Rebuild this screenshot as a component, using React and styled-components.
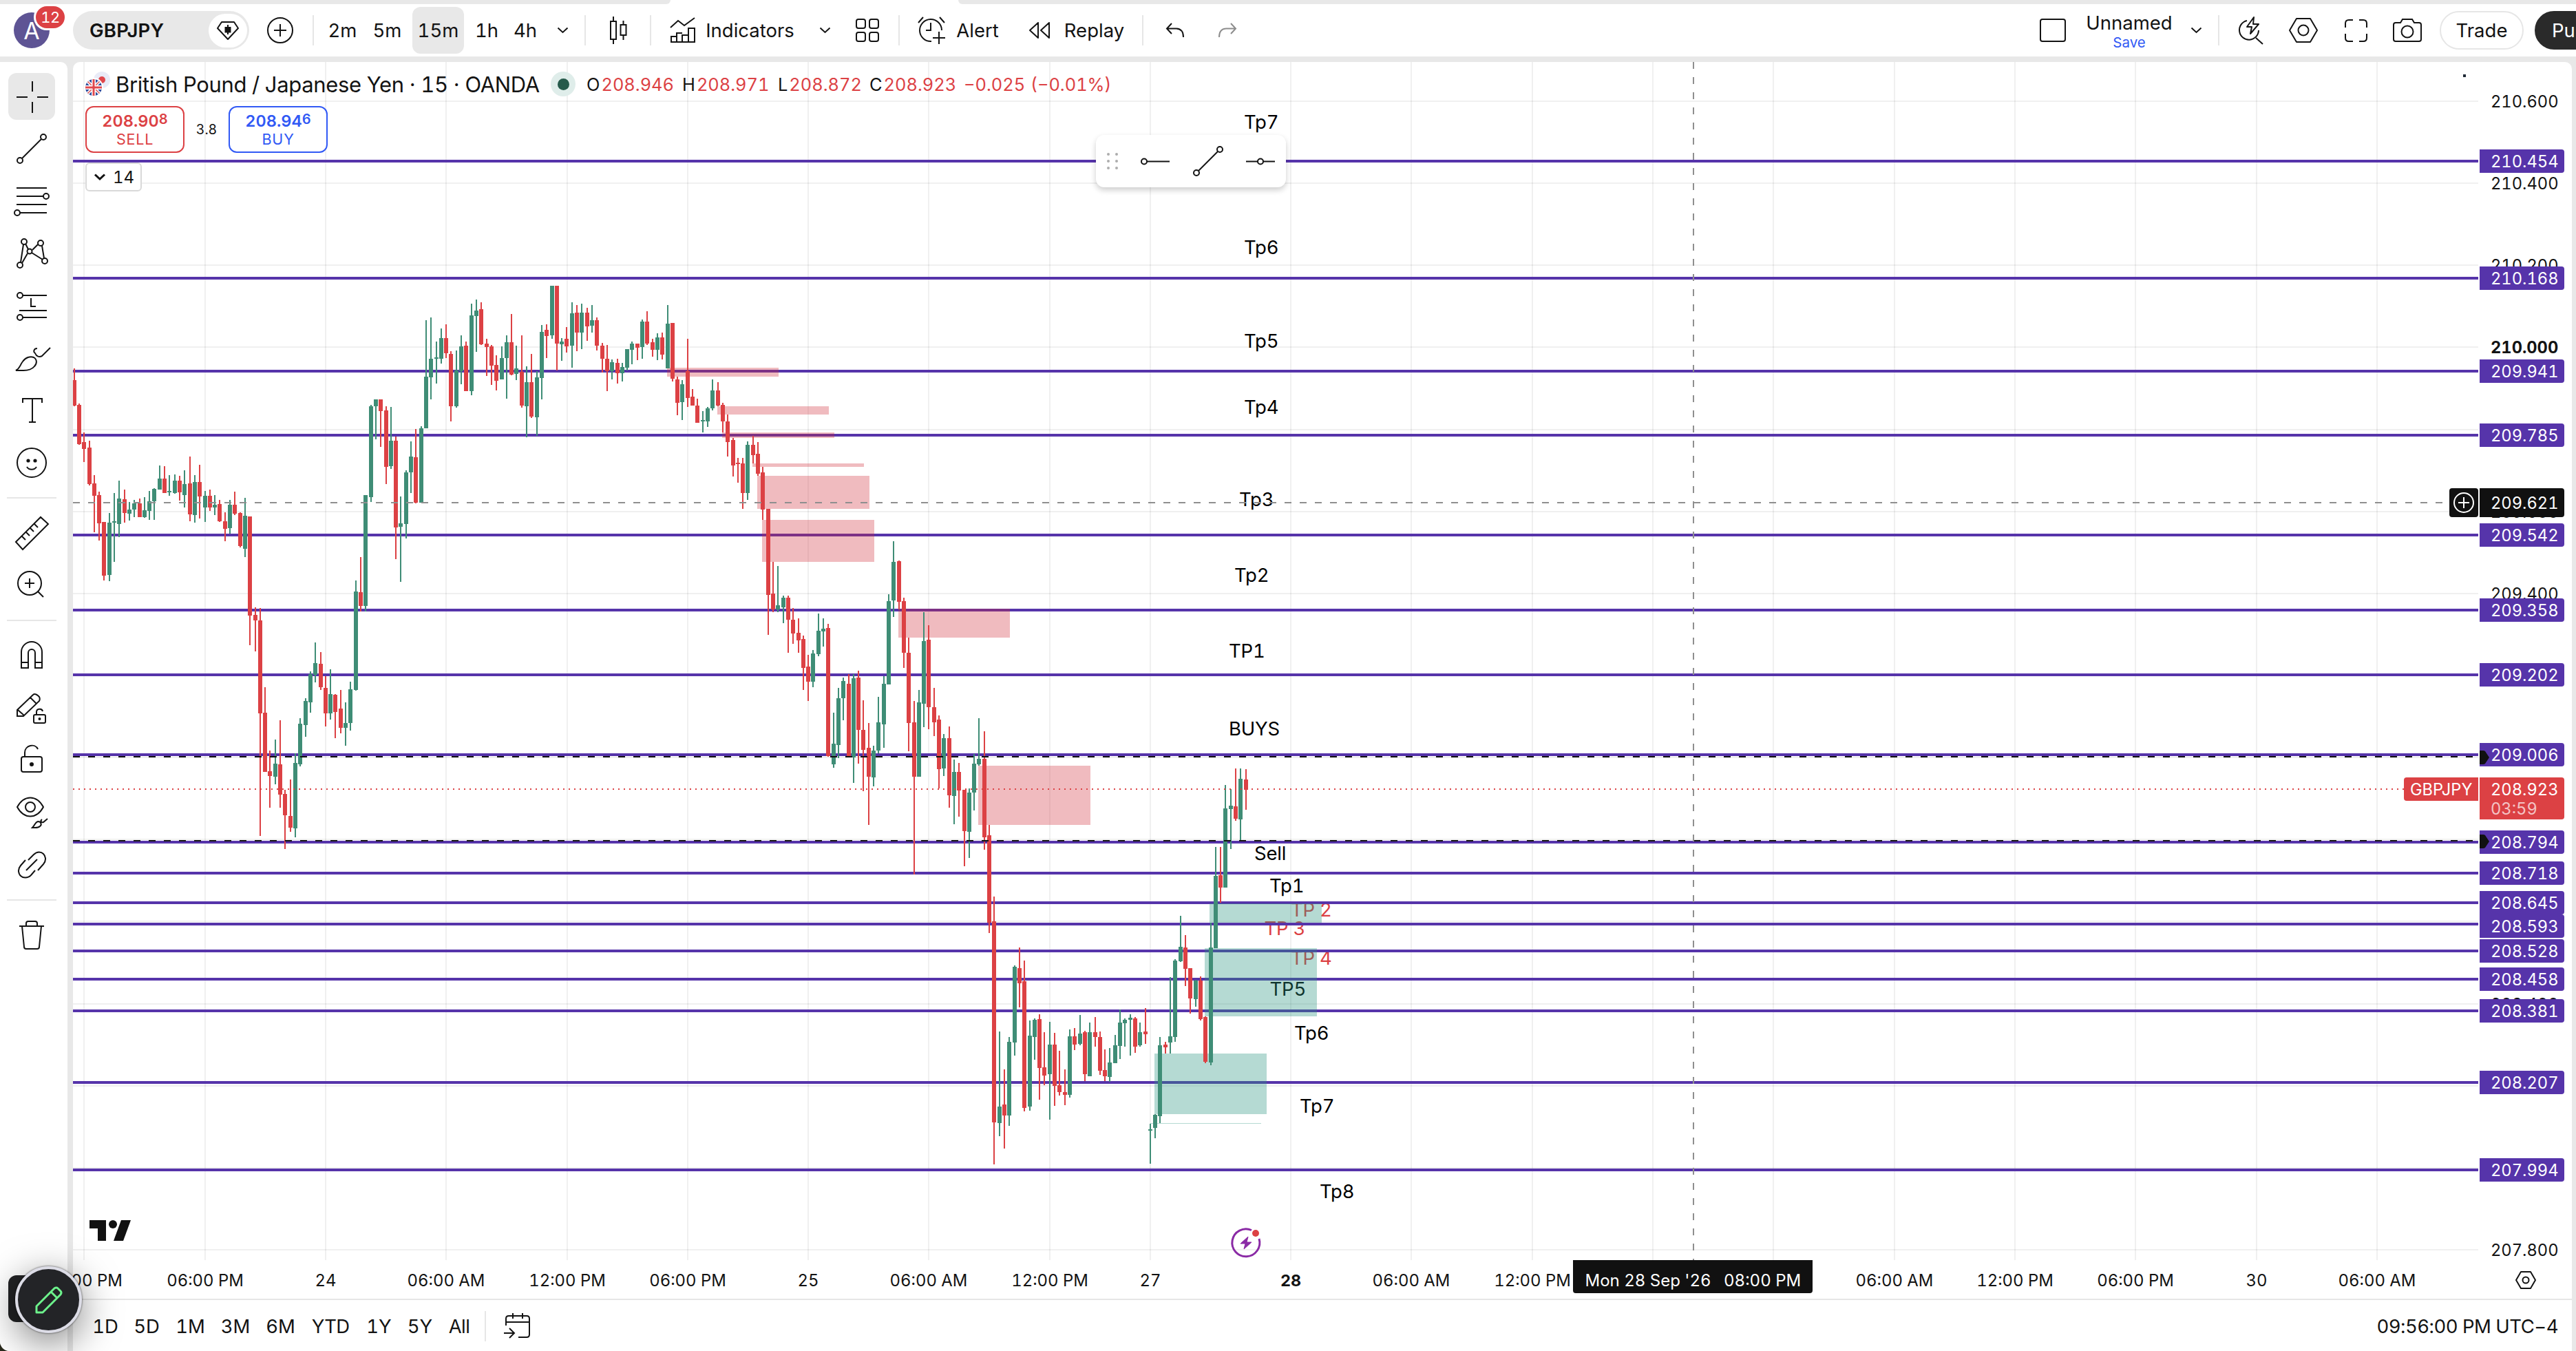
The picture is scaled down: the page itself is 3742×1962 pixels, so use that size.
import React from 'react';
import styled, { createGlobalStyle } from 'styled-components';

const ink = '#131313';
const red = '#dc4144';
const green = '#3f8d76';
const violet = '#5634aa';
const blue = '#3159f5';
const shell = '#e8e8e8';

const Global = createGlobalStyle`
  * { box-sizing: border-box; }
  html { background: #2a2a1c; }
  body {
    margin: 0;
    font-family: Inter, "Liberation Sans", sans-serif;
    font-variant-numeric: tabular-nums;
    color: ${ink};
    overflow: hidden;
  }
`;

/* ---------- frame ---------- */

const Window = styled.div`
  width: 3742px;
  height: 1962px;
  display: flex;
  flex-direction: column;
  background: ${shell};
  border-bottom-left-radius: 14px;
  overflow: hidden;
`;

const TabStrip = styled.div`
  height: 6px;
  display: flex;
  background: #fff;
`;

const StripPart = styled.div`
  width: ${(p) => p.$w}px;
  background: ${shell};
  border-radius: ${(p) => (p.$first ? '0 0 8px 0' : '0 0 0 8px')};
  margin-right: ${(p) => (p.$first ? 418 : 0)}px;
`;

const Header = styled.header`
  height: 76px;
  background: #fff;
  display: flex;
  align-items: center;
  padding-left: 20px;
  overflow: hidden;
`;

const Body = styled.div`
  flex: 1;
  margin-top: 8px;
  display: flex;
  gap: 8px;
  min-height: 0;
`;

const Tools = styled.nav`
  width: 98px;
  background: #fff;
  border-top-right-radius: 10px;
  padding-top: 12px;
  display: flex;
  flex-direction: column;
  align-items: flex-start;
`;

const Main = styled.main`
  width: 3630px;
  background: #fff;
  border-radius: 10px 10px 0 0;
  display: flex;
  flex-direction: column;
  position: relative;
`;

/* ---------- header parts ---------- */

const Slot = styled.div`
  flex: none;
  width: ${(p) => p.$w}px;
  height: 68px;
  margin-left: ${(p) => p.$ml || 0}px;
  display: flex;
  align-items: center;
  justify-content: center;
  border-radius: 12px;
  white-space: nowrap;
  font-size: 27.5px;
  line-height: 34px;
  background: ${(p) => (p.$active ? shell : 'transparent')};
`;

const Divider = styled.div`
  flex: none;
  width: 2px;
  height: 44px;
  margin-left: ${(p) => p.$ml || 0}px;
  background: #e6e6e6;
`;

const Avatar = styled.div`
  flex: none;
  position: relative;
  width: 52px;
  height: 52px;
  border-radius: 50%;
  background: #5e5494;
  color: #fff;
  font-size: 34px;
  display: flex;
  align-items: center;
  justify-content: center;
`;

const Badge = styled.span`
  position: absolute;
  left: 29px;
  top: -12px;
  width: 48px;
  height: 38px;
  border: 3px solid #fff;
  border-radius: 19px;
  background: ${red};
  font-size: 22px;
  letter-spacing: -0.5px;
  display: flex;
  align-items: center;
  justify-content: center;
`;

const SymbolPill = styled.div`
  flex: none;
  width: 256px;
  height: 56px;
  margin-left: 34px;
  padding: 0 3px 0 24px;
  border-radius: 28px;
  background: ${shell};
  display: flex;
  align-items: center;
  justify-content: space-between;
  font-size: 27.5px;
  font-weight: 600;
  letter-spacing: 0.2px;
`;

const PillKnob = styled.span`
  width: 56px;
  height: 49px;
  border-radius: 25px;
  background: #fff;
  display: flex;
  align-items: center;
  justify-content: center;
`;

const Spacer = styled.div`
  flex: none;
  width: ${(p) => p.$w}px;
`;

const LayoutName = styled.div`
  flex: none;
  width: 124px;
  margin-left: 29px;
  display: flex;
  flex-direction: column;
  align-items: center;
  font-size: 27.5px;
  line-height: 33px;
  padding-top: 2px;
`;

const SaveLink = styled.span`
  font-size: 20.5px;
  line-height: 24px;
  color: ${blue};
`;

const TradeButton = styled.button`
  flex: none;
  width: 122px;
  height: 56px;
  margin-left: 23px;
  padding: 0;
  border: 2px solid #e6e6e6;
  border-radius: 28px;
  background: #fff;
  font: inherit;
  font-size: 27.5px;
  color: ${ink};
`;

const PublishButton = styled(TradeButton)`
  width: 160px;
  margin-left: 16px;
  padding-left: 23px;
  border-color: #2a2a2a;
  background: #2a2a2a;
  color: #fff;
  text-align: left;
`;

/* ---------- tool column parts ---------- */

const ToolSlot = styled.div`
  width: 92px;
  height: 76px;
  display: flex;
  align-items: center;
  justify-content: center;
`;

const ToolFace = styled.div`
  width: 68px;
  height: 68px;
  border-radius: 12px;
  display: flex;
  align-items: center;
  justify-content: center;
  background: ${(p) => (p.$active ? shell : 'transparent')};
`;

const ToolRule = styled.div`
  width: 72px;
  height: 2px;
  margin: 12px 0 12px 10px;
  background: #e6e6e6;
`;

const Glyph = styled.svg`
  display: block;
  flex: none;
  overflow: visible;
  fill: none;
  stroke: ${(p) => (p.$filled ? 'none' : 'currentColor')};
  stroke-width: ${(p) => p.$sw || 2};
`;

/* ---------- chart parts ---------- */

const Plot = styled.svg`
  display: block;
  width: 3630px;
  height: 1796px;
  flex: none;
  border-radius: 10px 10px 0 0;
  font-family: Inter, "Liberation Sans", sans-serif;
  font-variant-numeric: tabular-nums;
`;

const AxisText = styled.text`
  font-size: ${(p) => p.$size || 24}px;
  fill: ${(p) => p.$c || ink};
  font-weight: ${(p) => (p.$bold ? 700 : 400)};
  text-anchor: ${(p) => p.$anchor || 'start'};
`;

const NoteText = styled.text`
  font-size: 27.5px;
  letter-spacing: -0.2px;
  fill: ${(p) => p.$c || '#000'};
`;

const Legend = styled.div`
  position: absolute;
  left: 18px;
  top: 10px;
  display: flex;
  flex-direction: column;
  align-items: flex-start;
`;

const LegendRow = styled.div`
  height: 44px;
  display: flex;
  align-items: center;
  white-space: nowrap;
`;

const Title = styled.span`
  width: 624px;
  margin-left: 6px;
  font-size: 31px;
  letter-spacing: -0.34px;
`;

const StatusDot = styled.span`
  width: 36px;
  height: 36px;
  margin-left: 8px;
  margin-right: 16px;
  border-radius: 50%;
  background: #dfedea;
  display: flex;
  align-items: center;
  justify-content: center;
  &::after {
    content: '';
    width: 17px;
    height: 17px;
    border-radius: 50%;
    background: #265a4b;
  }
`;

const Quote = styled.span`
  width: ${(p) => p.$w}px;
  font-size: 25.4px;
  color: ${red};
  b { font-weight: 400; color: ${ink}; margin-right: 2px; }
`;

const DealRow = styled.div`
  margin-top: 10px;
  display: flex;
  align-items: center;
`;

const DealButton = styled.div`
  width: 144px;
  height: 68px;
  border: 2px solid ${(p) => p.$c};
  border-radius: 12px;
  background: #fff;
  color: ${(p) => p.$c};
  display: flex;
  flex-direction: column;
  align-items: center;
  justify-content: center;
  gap: 1px;
`;

const DealPrice = styled.span`
  font-size: 23.5px;
  font-weight: 600;
  line-height: 27px;
  sup { font-size: 20px; line-height: 0; vertical-align: 4px; }
`;

const DealSide = styled.span`
  font-size: 21.5px;
  line-height: 25px;
  letter-spacing: 0.8px;
`;

const Spread = styled.span`
  width: 64px;
  text-align: center;
  font-size: 19.5px;
`;

const Collapse = styled.div`
  margin-top: 14px;
  width: 82px;
  height: 42px;
  border: 2px solid #d9d9d9;
  border-radius: 6px;
  background: #fff;
  display: flex;
  align-items: center;
  padding-left: 11px;
  gap: 11px;
  font-size: 24px;
  position: relative;
`;

const DrawBar = styled.div`
  position: absolute;
  left: 1486px;
  top: 106px;
  width: 276px;
  height: 76px;
  border-radius: 12px;
  background: #fff;
  box-shadow: 0 4px 8px rgba(0, 0, 0, 0.2);
  display: flex;
  align-items: center;
  padding: 0 16px;
  justify-content: space-between;
`;

const FootBar = styled.footer`
  flex: none;
  height: 76px;
  padding-top: 2px;
  border-top: 2px solid #e6e6e6;
  display: flex;
  align-items: center;
  font-size: 27.5px;
`;

const Range = styled.span`
  flex: none;
  width: ${(p) => p.$w}px;
  text-align: center;
  white-space: nowrap;
  letter-spacing: ${(p) => p.$ls || 0}px;
`;

const Clock = styled.span`
  margin-left: auto;
  margin-right: 20px;
  white-space: nowrap;
  letter-spacing: -0.5px;
`;

const PenStub = styled.div`
  position: absolute;
  left: 12px;
  top: 1852px;
  width: 60px;
  height: 68px;
  border-radius: 12px;
  background: #222325;
`;

const PenBubble = styled.div`
  position: absolute;
  left: 22px;
  top: 1839px;
  width: 97px;
  height: 97px;
  border-radius: 50%;
  border: 4px solid #dcdce6;
  background: #232427;
  color: #6df28c;
  box-shadow: 0 0 2px 1px rgba(0, 0, 0, 0.35), 0 14px 56px rgba(0, 0, 0, 0.5);
  display: flex;
  align-items: center;
  justify-content: center;
`;

/* ---------- data ---------- */

const levels = [
  [234, '210.454'], [404, '210.168'], [539, '209.941'], [632, '209.785'], [777, '209.542'], [886, '209.358'],
  [980, '209.202'], [1096, '209.006'], [1223, '208.794'], [1268, '208.718'], [1311, '208.645'],
  [1342, '208.593', 1345], [1381, '208.528'], [1422, '208.458'], [1468, '208.381'], [1572, '208.207'], [1699, '207.994'],
];

const notes = [
  [1807, 187, 'Tp7'], [1807, 368.5, 'Tp6'], [1807, 505, 'Tp5'], [1807, 600.5, 'Tp4'], [1800, 735, 'Tp3'],
  [1793, 844.5, 'Tp2'], [1785, 954.5, 'TP1'], [1785, 1067.5, 'BUYS'], [1822, 1249, 'Sell'], [1844, 1296, 'Tp1'],
  [1875, 1330.5, 'TP 2', red], [1836.5, 1358, 'TP 3', red], [1875, 1401, 'TP 4', red], [1844.5, 1446, 'TP5'],
  [1880, 1510, 'Tp6'], [1888, 1616, 'Tp7'], [1917, 1739.5, 'Tp8'],
];

const zones = [
  [969, 534, 162, 13], [1042, 590, 162, 12], [1049, 628, 163, 8], [1093, 673, 162, 5], [1100, 691, 163, 48],
  [1107, 755, 163, 61], [1305, 884, 162, 42], [1421, 1112, 163, 86],
  [1757, 1312, 163, 28, 1], [1750, 1377, 163, 99, 1], [1677, 1530, 163, 88, 1], [1671, 1631, 161, 1, 1],
];

const timeline = [
  [122, '12:00 PM'], [298, '06:00 PM'], [473, '24'], [648, '06:00 AM'], [824, '12:00 PM'], [999, '06:00 PM'],
  [1174, '25'], [1349, '06:00 AM'], [1525, '12:00 PM'], [1671, '27'], [1875, '28'], [2050, '06:00 AM'],
  [2226, '12:00 PM'], [2401, ''], [2576, ''], [2752, '06:00 AM'], [2927, '12:00 PM'], [3102, '06:00 PM'],
  [3278, '30'], [3453, '06:00 AM'],
];

/* Candle blocks: direction, then high, body top, body bottom and low in the block's own units. */
const blocks = [
  { first: -2, top: 380, unit: 1.742, bars: `R270 300 364 366,R359 362 462 463,R432 456 474 507,R453 470 563 566,R540 561 592 685,R582 591 662 706,R659 659 794 807,G636 660 793 808,G585 657 660 760,G554 599 664 697,R577 601 636 660,G608 627 638 655,G603 612 627 646,R599 612 646 646,G596 629 646 648,G580 606 631 653,G573 575 606 653,G516 549 577 577,R517 549 585 585,G540 580 584 592,G538 554 585 587,R542 554 584 605,G528 563 591 622,R493 561 639 657,G540 558 641 660,R514 558 594 650,G580 592 622 659,R577 592 622 631,G591 615 622 641,R603 613 657 659,R634 657 676 707,G603 615 674 688,R582 615 638 641,R634 636 720 723,G598 643 727 747,R645 645 896 970,R875 894 908 986,R876 908 1143 1453,R1077 1141 1291 1291,R1237 1289 1301 1382,G1209 1270 1303 1322,R1160 1272 1348 1382,R1336 1347 1401 1486,R1310 1402 1432 1443,G1244 1268 1434 1456,G1155 1169 1272 1277,G1105 1112 1173 1202,G1037 1043 1115 1141,G963 1016 1045 1064,R988 1017 1077 1084,R1048 1078 1143 1176,G1031 1094 1143 1159,R1094 1096 1139 1206,R1084 1131 1179 1193,G1115 1167 1179 1225,G1063 1082 1167 1186,G807 835 1084 1085,R747 836 871 885,G591 591 871 885,G362 366 596 608,G348 348 366 449,R348 348 378 469,R366 376 519 563,G368 453 517 524,R443 453 672 753,G594 662 671 810,G528 533 664 700,G455 493 533 585,R423 495 610 612,G416 422 610 610,G148 291 422 422,G141 246 293 348,G202 242 246 308,G169 193 246 258,R159 193 232 244,R226 233 366 404,G225 276 366 369,G186 214 277 310,R202 213 328 328,G106 136 328 338,G96 124 138 228,R103 120 209 211,R195 207 216 289,R211 214 263 312,R237 261 301 326,G214 244 298 298,G186 204 244 347,R132 204 286 287,G213 270 284 300,R186 279 364 369,G265 305 366 444,R233 305 392 395,G277 293 394 441,G160 178 294 348,R159 172 188 244,G61 61 186 195,R61 61 207 275,G193 202 209 251,R166 195 214 230,G103 131 213 268,R110 129 179 226,G106 129 179 221,R117 129 164 200,G110 148 162 179,R141 148 213 225,R206 213 246 280,R211 246 277 328,G247 254 277 298,R246 256 282 308,G256 267 282 303,G221 221 268 275,G202 207 223 260,R207 207 218 249,G146 152 216 246,R125 152 207 211,R195 204 223 240,G181 192 223 249,R179 192 235 247,G110 157 270 270,R155 155 296 303,R291 298 357 389,G300 310 355 401,R195 277 345 368,R322 341 364 364,R347 364 408 408,G378 401 404 432,G368 371 404 418,G298 326 371 376,R305 326 364 366,R357 362 404 432,R387 404 456 493,R446 451 516 544,R497 509 512 559,R497 510 585 625,G455 463 585 603,R441 463 490 510,R456 486 537 542,R519 533 627 653,R625 625 843 944,R760 840 880 887,G770 869 880 887,G845 850 875 915,R845 850 906 990,R876 906 941 967,R902 939 958 990,R946 955 1028 1084,R995 1024 1063 1112,G983 991 1063 1077,G890 934 993 998,G902 929 936 974,R916 927 1250 1253,G1141 1220 1272 1281,G1078 1105 1223 1256,G1052 1061 1105 1160,R1044 1068 1251 1251,G1044 1054 1254 1319,R1035 1052 1185 1270,R1110 1185 1235 1340,R1167 1230 1303 1425,G1225 1237 1305 1328,G1101 1166 1237 1244,G1048 1068 1171 1230,G841 859 1070 1070,G707 760 857 899,R756 758 861 880,R850 859 990 1028,R951 990 1167 1239,R1112 1166 1303 1551,G1084 1115 1303 1303,G887 960 1119 1178,R920 956 1127 1183,R1078 1127 1166 1200,R1148 1159 1284 1333,G1195 1206 1282 1301,R1176 1206 1350 1382,G1260 1291 1352 1423,R1268 1291 1338 1404,R1336 1336 1441 1530,G1333 1343 1443 1509,G1245 1270 1343 1389,G1155 1258 1272 1275,R1188 1258 1456 1488` },
  { first: 180, top: 1080, unit: 2.24, bars: `R264 298 582 616,R497 578 1232 1369,G936 1180 1234 1277,R1060 1174 1210 1317,G954 970 1210 1243,G721 726 972 1015,R663 730 780 858,R706 773 1185 1196,G900 950 1180 1194,G894 898 954 1028,R880 896 1055 1158,R939 1053 1080 1111,G905 979 1075 1223,R941 979 1113 1178,R999 1111 1133 1145,R1060 1133 1142 1176,G930 952 1142 1151,R925 952 979 997,G883 943 977 981,R934 939 1075 1098,G907 939 1082 1082,R889 939 954 986,R936 954 1064 1077,R995 1062 1082 1098,G990 1037 1084 1100,G948 981 1039 1039,G865 907 983 1026,G894 898 909 986,G880 892 898 1015,R889 894 986 1006,G907 939 981 986,R860 936 945 977,G1236 1254 1259 1366,G1205 1207 1250 1284,G954 981 1212 1234,R970 979 988 1008,G759 952 972 1008,G701 706 954 970,G560 661 708 710,R623 663 732 788,R730 730 829 878,G768 770 831 856,R757 770 896 900,R887 889 1035 1039,G583 663 1037 1046,G336 430 665 665,R336 428 468 518,G134 211 468 468,G148 202 213 343,R81 204 244 251,G81 114 246 318,R83 116 150 215` },
];

const candles = blocks.flatMap((b) =>
  b.bars.split(',').map((bar, i) => {
    const [h, t, d, l] = bar.slice(1).split(' ').map((v) => Math.round(b.top + Number(v) / b.unit));
    return { x: Math.round(122.2 + 7.305 * (b.first + i)), up: bar[0] === 'G', h, t, d: Math.max(d, t + 2), l };
  })
);

const priceTicks = Array.from({ length: 15 }, (_, k) => ({
  y: Math.round(147 + 119.14 * k),
  label: (210.6 - 0.2 * k).toFixed(3),
}));

/* ---------- icons ---------- */

const Ring = ({ x, y, r = 4 }) => <circle cx={x} cy={y} r={r} fill="#fff" />;

const toolIcons = {
  cross: <path d="M6 29H22M36 29H52M29 6V21M29 36V52" />,
  trend: <><path d="M14 42 42 14" /><Ring x={11} y={45} /><Ring x={45} y={11} /></>,
  fib: <><path d="M6 9H50M6 21H45M6 33H50M11 45H50" /><Ring x={49} y={21} /><Ring x={7} y={45} /></>,
  pattern: (
    <>
      <path d="M16 15 12 41M19 14 23 22M14 42 22 28M29 23 37 15M28 27 44 37M43 17 46 35" />
      <Ring x={17} y={11} /><Ring x={11} y={45} /><Ring x={25} y={25} r={3.5} /><Ring x={41} y={13} /><Ring x={47} y={39} />
    </>
  ),
  position: <><path d="M15 13H50M27 17V29H34M10 35H50M15 45H50" /><Ring x={11} y={13} /><Ring x={11} y={45} /></>,
  brush: (
    <>
      <path d="M5 46c6-3 6-8 10-13 4-6 11-8 16-6 5 3 5 9 1 13-4 5-10 6-16 6z" />
      <path d="M36 14c-5 0-6 5-3 7 2 5 6 6 10 4L55 13" />
    </>
  ),
  text: <path d="M15 17V11H43V17M29 11V45M24 45H34" />,
  smile: <><circle cx="28" cy="28" r="21" /><path d="M21 34c3 5 11 5 14 0" /><circle cx="23" cy="25" r="1.6" fill="currentColor" /><circle cx="33" cy="25" r="1.6" fill="currentColor" /></>,
  ruler: <path d="M5 41 41 5 52 15 15 52ZM14 33 19 38M20 27 25 32M26 21 31 26M32 15 37 20" />,
  zoom: <><circle cx="25" cy="25" r="17" /><path d="M18 25H32M25 18V32M37 37 45 45" /></>,
  magnet: <path d="M13 46V23a15 15 0 0 1 30 0V46H33V24a5 5 0 0 0-10 0V46ZM13 38H23M33 38H43" />,
  pencilLock: (
    <>
      <path d="M7 40V31L30 9c3-3 7 1 9 3 1 2 1 4 0 6L16 40ZM26 13 35 22M8 31 17 39" />
      <rect x="31" y="38" width="17" height="12" rx="2" fill="#fff" /><path d="M35 37V34c0-5 8-6 9-1" /><circle cx="39.500" cy="44" r="1" />
    </>
  ),
  lock: <><rect x="13" y="23" width="30" height="22" rx="3" /><path d="M18 22V17c0-11 15-14 19-5" /><circle cx="28" cy="34" r="2" fill="currentColor" /></>,
  eye: (
    <>
      <path d="M7 20C17 2 35 2 45 20 35 38 17 38 7 20Z" /><circle cx="26" cy="20" r="7" />
      <path d="M29 50c4-4 4-8 8-9 5 0 6 5 3 7-3 3-7 2-11 2zM43 38c-3 2-1 5 2 4l6-5" />
    </>
  ),
  link: <path d="M19 21 12 29c-5 6-3 12 0 15s10 4 15-1L33 36M37 36 45 27c5-6 3-12 0-15s-9-4-14 1L23 21M20 36 36 20" />,
  trash: <path d="M10 15H46M20 15V11c0-2 1-3 3-3H33c2 0 3 1 3 3V15M14 15 17 45c0 2 1 3 3 3H36c2 0 3-1 3-3L42 15" />,
};

const Tool = ({ name, active }) => (
  <ToolSlot>
    <ToolFace $active={active}>
      <Glyph width="56" height="56" viewBox="0 0 56 56">{toolIcons[name]}</Glyph>
    </ToolFace>
  </ToolSlot>
);

const Chevron = ({ w = 15, sw = 2 }) => (
  <Glyph width={w} height="8" viewBox="0 0 15 8" $sw={sw}><path d="M0.500 0.500 7.500 7 14.500 0.500" /></Glyph>
);

const Hexagon = () => (
  <Glyph width="42" height="36" viewBox="0 0 42 36">
    <path d="M11 1H31L41 18 31 35H11L1 18Z" strokeLinejoin="round" /><circle cx="21" cy="18" r="7.500" />
  </Glyph>
);

/* ---------- sections ---------- */

function TopBar() {
  return (
    <Header>
      <Avatar>A<Badge>12</Badge></Avatar>
      <SymbolPill>
        GBPJPY
        <PillKnob>
          <Glyph width="32" height="27" viewBox="0 0 32 27">
            <path d="M7 1H25L31 10 16 26 1 10Z" strokeLinejoin="round" /><path d="M16 5V19" /><rect x="12.500" y="9" width="7" height="6.500" fill="currentColor" />
          </Glyph>
        </PillKnob>
      </SymbolPill>
      <Slot $w={38} $ml={26}>
        <Glyph width="38" height="38" viewBox="0 0 38 38"><circle cx="19" cy="19" r="18" /><path d="M10 19H28M19 10V28" /></Glyph>
      </Slot>
      <Divider $ml={28} />
      <Slot $w={65} $ml={9}>2m</Slot>
      <Slot $w={65}>5m</Slot>
      <Slot $w={75} $ml={4} $active>15m</Slot>
      <Slot $w={66}>1h</Slot>
      <Slot $w={46}>4h</Slot>
      <Slot $w={63}><Chevron /></Slot>
      <Divider />
      <Slot $w={93}>
        <Glyph width="27" height="40" viewBox="-1 0 27 40">
          <rect x="2" y="7" width="8" height="26" /><path d="M6 0V7M6 33V40M20.500 6V12M20.500 27V34" /><rect x="16.500" y="12" width="8" height="15" />
        </Glyph>
      </Slot>
      <Divider />
      <Slot $w={40} $ml={26}>
        <Glyph width="36" height="36" viewBox="0 0 36 36">
          <path d="M0 14 11 4 20 11 35 0M1 35V27H9M9 35V22H17M17 35V25H26M26 35V15H35V35H0M9 27V22" />
        </Glyph>
      </Slot>
      <Slot $w={129} $ml={13}>Indicators</Slot>
      <Slot $w={50} $ml={19}><Chevron /></Slot>
      <Slot $w={74}>
        <Glyph width="34" height="34" viewBox="0 0 34 34">
          <rect x="1" y="1" width="13" height="13" rx="3" /><rect x="20" y="1" width="13" height="13" rx="3" />
          <rect x="1" y="20" width="13" height="13" rx="3" /><rect x="20" y="20" width="13" height="13" rx="3" />
        </Glyph>
      </Slot>
      <Divider $ml={8} />
      <Slot $w={40} $ml={26}>
        <Glyph width="40" height="40" viewBox="0 0 40 40">
          <path d="M20 36A16 16 0 1 1 35 20M1 9 8 1M32 1 39 9M19 9V20H12M31 22V40M22 31H40" />
        </Glyph>
      </Slot>
      <Slot $w={64} $ml={15}>Alert</Slot>
      <Slot $w={40} $ml={38}>
        <Glyph width="30" height="26" viewBox="0 0 30 26"><path d="M13 2V24L1 13ZM29 2V24L17 13Z" strokeLinejoin="round" /></Glyph>
      </Slot>
      <Slot $w={89} $ml={15}>Replay</Slot>
      <Divider $ml={25} />
      <Slot $w={40} $ml={26}>
        <Glyph width="26" height="21" viewBox="0 0 26 21"><path d="M8 0 1 7.500 8 15M1 7.500H15Q25 8 25 20" /></Glyph>
      </Slot>
      <Slot $w={40} $ml={36}>
        <Glyph width="26" height="21" viewBox="0 0 26 21" color="#8c8c8c"><path d="M18 0 25 7.500 18 15M25 7.500H11Q1 8 1 20" /></Glyph>
      </Slot>
      <Spacer $w={1159} />
      <Slot $w={40}>
        <Glyph width="38" height="34" viewBox="0 0 38 34"><rect x="1" y="1" width="36" height="32" rx="3" /></Glyph>
      </Slot>
      <LayoutName>Unnamed<SaveLink>Save</SaveLink></LayoutName>
      <Slot $w={40} $ml={15}><Chevron /></Slot>
      <Divider $ml={12} />
      <Slot $w={48} $ml={22}>
        <Glyph width="36" height="40" viewBox="0 0 36 40">
          <path d="M12 6A14 14 0 1 0 29 20M25 31 35 40" /><path d="M22 1 12 15H19L17 25 29 11H21Z" strokeLinejoin="round" />
        </Glyph>
      </Slot>
      <Slot $w={48} $ml={28}><Hexagon /></Slot>
      <Slot $w={48} $ml={28}>
        <Glyph width="33" height="33" viewBox="0 0 33 33"><path d="M1 12V6Q1 1 6 1H12M21 1H27Q32 1 32 6V12M32 21V27Q32 32 27 32H21M12 32H6Q1 32 1 27V21" /></Glyph>
      </Slot>
      <Slot $w={48} $ml={27}>
        <Glyph width="42" height="34" viewBox="0 0 42 34">
          <path d="M1 9Q1 6 4 6H11L14 1H28L31 6H38Q41 6 41 9V30Q41 33 38 33H4Q1 33 1 30Z" /><circle cx="21" cy="19" r="8.500" />
        </Glyph>
      </Slot>
      <TradeButton>Trade</TradeButton>
      <PublishButton>Publish</PublishButton>
    </Header>
  );
}

function ToolColumn() {
  return (
    <Tools>
      <Tool name="cross" active />
      <Tool name="trend" />
      <Tool name="fib" />
      <Tool name="pattern" />
      <Tool name="position" />
      <Tool name="brush" />
      <Tool name="text" />
      <Tool name="smile" />
      <ToolRule />
      <Tool name="ruler" />
      <Tool name="zoom" />
      <ToolRule />
      <Tool name="magnet" />
      <Tool name="pencilLock" />
      <Tool name="lock" />
      <Tool name="eye" />
      <Tool name="link" />
      <ToolRule />
      <Tool name="trash" />
    </Tools>
  );
}

const Tag = ({ y, label, h = 34, fill = violet }) => (
  <g>
    <path d={`M3602 ${y - h / 2}H3721q4 0 4 4V${y + h / 2 - 4}q0 4-4 4H3602Z`} fill={fill} />
    <AxisText x="3618" y={y + 8.5} $size={23.7} $c="#fff">{label}</AxisText>
  </g>
);

function ChartPlot() {
  return (
    <Plot viewBox="106 90 3630 1796">
      <g fill="#000" fillOpacity="0.06" shapeRendering="crispEdges">
        {timeline.map(([x]) => <rect key={x} x={x - 1} y="90" width="2" height="1740" />)}
        {priceTicks.map(({ y }) => <rect key={y} x="106" y={y - 1} width="3494" height="2" />)}
      </g>
      {notes.map(([x, y, t, c]) => <NoteText key={`${t}${y}`} x={x} y={y} $c={c}>{t}</NoteText>)}
      <g fill={violet} shapeRendering="crispEdges">
        {levels.map(([y]) => <rect key={y} x="106" y={y - 2} width="3494" height="4" />)}
      </g>
      <g shapeRendering="crispEdges">
        {zones.map(([x, y, w, h, up]) => (
          <rect key={`${x}-${y}`} x={x} y={y} width={w} height={h} fill={up ? 'rgba(43,149,129,0.35)' : 'rgba(208,42,55,0.32)'} />
        ))}
        {candles.map(({ x, up, h, t, d, l }) => (
          <path key={x} d={`M${x - 1} ${h}h2V${l}h-2ZM${x - 3} ${t}h6V${d}h-6Z`} fill={up ? green : red} />
        ))}
      </g>
      <g strokeWidth="2" shapeRendering="crispEdges">
        <path d="M106 1146H3492" stroke={red} strokeDasharray="2 6" />
        <path d="M106 1099H3600M106 1221H3600" stroke="#111" strokeDasharray="10 12" />
        <path d="M106 730H3557" stroke="#8f8f8f" strokeDasharray="10 12" />
        <path d="M2460 90V1830" stroke="#8f8f8f" strokeDasharray="10 12" />
      </g>

      <g fill="#111">
        <path d="M130 1772H154V1802H142V1784H130Z" /><circle cx="164" cy="1778" r="6" /><path d="M176 1772H190L179 1802H165Z" />
      </g>
      <g fill="none" stroke="#8a2aa5" strokeWidth="3">
        <path d="M1818 1786.500A20 20 0 1 0 1829 1799" />
        <path d="M1813 1796 1802 1806H1809L1807 1814 1818 1804H1811Z" fill="#8a2aa5" strokeWidth="1" />
        <circle cx="1824" cy="1791" r="5" fill={red} stroke="none" />
      </g>

      {priceTicks.map(({ y, label }) => (
        <AxisText key={label} x="3618" y={y + 8.5} $size={23.7} $bold={label === '210.000'}>{label}</AxisText>
      ))}
      {levels.map(([y, label, at]) => <Tag key={label} y={at || y} label={label} />)}
      <path d="M3602 1090h5q2 0 3 1l6 9-6 9q-1 1-3 1h-5ZM3602 1212h5q2 0 3 1l6 9-6 9q-1 1-3 1h-5Z" fill="#111" />
      <path d="M3602 1129H3721q4 0 4 4V1186q0 4-4 4H3602Z" fill={red} />
      <AxisText x="3618" y="1154.500" $size={23.7} $c="#fff">208.923</AxisText>
      <AxisText x="3618" y="1182.500" $size={23.7} $c="rgba(255,255,255,0.7)">03:59</AxisText>
      <path d="M3600 1129H3496q-4 0-4 4V1159q0 4 4 4H3600Z" fill={red} />
      <AxisText x="3501" y="1154.500" $size={23.6} $c="#fff">GBPJPY</AxisText>
      <Tag y={730} h={42} label="209.621" fill="#111" />
      <rect x="3558" y="709" width="42" height="42" rx="4" fill="#111" />
      <g fill="none" stroke="#fff" strokeWidth="2"><circle cx="3579" cy="730" r="14" /><path d="M3571 730H3587M3579 722V738" /></g>
      <rect x="3578" y="108" width="4" height="4" fill="#1f2a36" />

      {timeline.map(([x, label]) => (
        <AxisText key={x} x={x} y="1868" $size={label === '28' ? 23.4 : 23.9} $anchor="middle" $bold={label === '28'}>{label}</AxisText>
      ))}
      <path d="M2285 1830H2633V1874q0 4-4 4H2289q-4 0-4-4Z" fill="#111" />
      <AxisText x="2302.500" y="1867.500" $c="#fff">Mon 28 Sep '26</AxisText>
      <AxisText x="2504" y="1867.500" $c="#fff">08:00 PM</AxisText>
      <g transform="translate(3654 1846)" fill="none" stroke={ink} strokeWidth="2">
        <path d="M8 1H22L29 13 22 25H8L1 13Z" strokeLinejoin="round" /><circle cx="15" cy="13" r="4.500" />
      </g>
    </Plot>
  );
}

function PairFlags() {
  return (
    <Glyph width="38" height="38" viewBox="0 0 38 38" $filled>
      <circle cx="24" cy="13" r="12" fill="#e9ebf7" />
      <circle cx="24" cy="13" r="5" fill="#e0474c" />
      <circle cx="12" cy="24" r="14" fill="#fff" />
      <clipPath id="uk"><circle cx="12" cy="24" r="12" /></clipPath>
      <g clipPath="url(#uk)">
        <rect y="12" width="24" height="24" fill="#2a4a9c" />
        <path d="M0 12 24 36M24 12 0 36" stroke="#fff" strokeWidth="4.500" />
        <path d="M0 12 24 36M24 12 0 36" stroke="#e0575a" strokeWidth="1.500" />
        <path d="M12 12V36M0 24H24" stroke="#fff" strokeWidth="6" />
        <path d="M12 12V36M0 24H24" stroke="#e0474c" strokeWidth="3" />
      </g>
    </Glyph>
  );
}

function ChartLegend() {
  return (
    <Legend>
      <LegendRow>
        <PairFlags />
        <Title>British Pound / Japanese Yen · 15 · OANDA</Title>
        <StatusDot />
        <Quote $w={139}><b>O</b>208.946</Quote>
        <Quote $w={139}><b>H</b>208.971</Quote>
        <Quote $w={133}><b>L</b>208.872</Quote>
        <Quote $w={137}><b>C</b>208.923</Quote>
        <Quote $w={97}>−0.025</Quote>
        <Quote $w={120}>(−0.01%)</Quote>
      </LegendRow>
      <DealRow>
        <DealButton $c={red}><DealPrice>208.90<sup>8</sup></DealPrice><DealSide>SELL</DealSide></DealButton>
        <Spread>3.8</Spread>
        <DealButton $c={blue}><DealPrice>208.94<sup>6</sup></DealPrice><DealSide>BUY</DealSide></DealButton>
      </DealRow>
      <Collapse><Chevron w={16} sw={3} />14</Collapse>
    </Legend>
  );
}

function FloatingTools() {
  return (
    <DrawBar>
      <Glyph width="16" height="24" viewBox="0 0 16 24" $filled>
        {[2, 12, 22].map((y) => (
          <g key={y} fill="#adadad"><circle cx="2" cy={y} r="2" /><circle cx="14" cy={y} r="2" /></g>
        ))}
      </Glyph>
      <Glyph width="42" height="10" viewBox="0 0 42 10"><path d="M9 5.500H42" /><Ring x={5} y={5.5} /></Glyph>
      <Glyph width="44" height="44" viewBox="0 0 44 44"><path d="M8 36 36 8" /><Ring x={5} y={39} /><Ring x={39} y={5} /></Glyph>
      <Glyph width="42" height="10" viewBox="0 0 42 10"><path d="M0 5.500H17M25 5.500H42" /><Ring x={21} y={5.5} /></Glyph>
    </DrawBar>
  );
}

function RangeBar() {
  return (
    <FootBar>
      <Spacer $w={16} />
      <Range $w={62}>1D</Range>
      <Range $w={58}>5D</Range>
      <Range $w={69}>1M</Range>
      <Range $w={62}>3M</Range>
      <Range $w={69}>6M</Range>
      <Range $w={76} $ls={-0.8}>YTD</Range>
      <Range $w={65}>1Y</Range>
      <Range $w={54}>5Y</Range>
      <Range $w={60} $ls={-0.6}>All</Range>
      <Divider $ml={7} />
      <Slot $w={90}>
        <Glyph width="38" height="36" viewBox="0 1 38 36">
          <path d="M3 18V8Q3 4 7 4H33Q37 4 37 8V31Q37 35 33 35H21M3 13H37M13 0V8M27 0V8M0 29H15M8 22 15 29 8 36" />
        </Glyph>
      </Slot>
      <Clock>09:56:00 PM UTC−4</Clock>
    </FootBar>
  );
}

export default function App() {
  return (
    <>
      <Global />
      <Window>
        <TabStrip>
          <StripPart $w={974} $first />
          <StripPart $w={2350} />
        </TabStrip>
        <TopBar />
        <Body>
          <ToolColumn />
          <Main>
            <ChartPlot />
            <ChartLegend />
            <FloatingTools />
            <RangeBar />
          </Main>
        </Body>
      </Window>
      <PenStub />
      <PenBubble>
        <Glyph width="40" height="40" viewBox="0 0 40 40" $sw={3}>
          <path d="M2 29V38H11L37 12Q39 9 37 7L33 3Q31 1 28 3ZM23 8 32 17" strokeLinejoin="round" />
        </Glyph>
      </PenBubble>
    </>
  );
}
